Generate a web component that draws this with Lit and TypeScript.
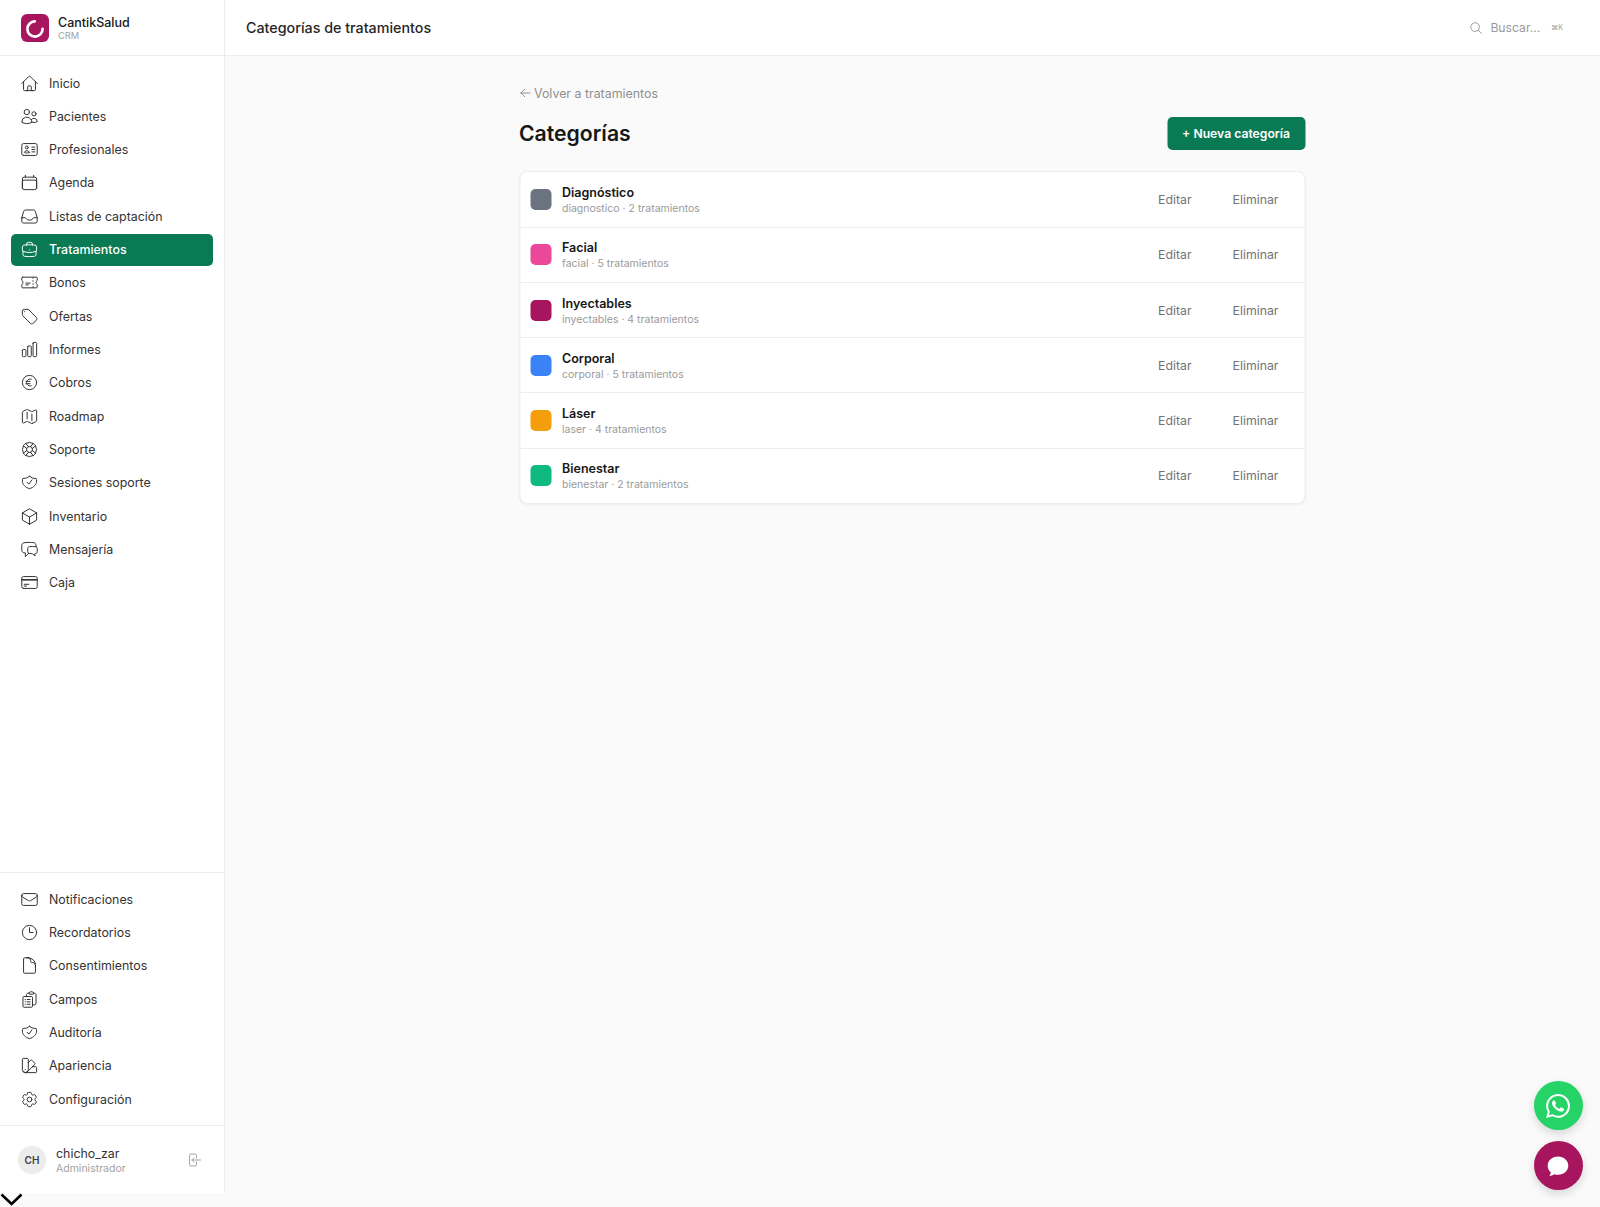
import { LitElement, html, css, svg } from "lit";
import { customElement } from "lit/decorators.js";

const SHIELD = "M9 11.75 11.25 14 15 8.75m-3-4.5A12 12 0 0 1 3.6 7c-.4 1-.6 2-.6 3.2 0 4.4 3.8 8 9 9.6 5.2-1.6 9-5.2 9-9.6 0-1.2-.2-2.2-.6-3.2A12 12 0 0 1 12 4.25Z";
const P: Record<string, string> = {
  home: "m2.25 12 8.954-8.955c.44-.439 1.152-.439 1.591 0L21.75 12M4.5 9.75v10.125c0 .621.504 1.125 1.125 1.125H9.75v-4.875c0-.621.504-1.125 1.125-1.125h2.25c.621 0 1.125.504 1.125 1.125V21h4.125c.621 0 1.125-.504 1.125-1.125V9.75M8.25 21h8.25",
  users: "M15 19.128a9.38 9.38 0 0 0 2.625.372 9.337 9.337 0 0 0 4.121-.952 4.125 4.125 0 0 0-7.533-2.493M15 19.128v-.003c0-1.113-.285-2.16-.786-3.07M15 19.128v.106A12.318 12.318 0 0 1 8.624 21c-2.331 0-4.512-.645-6.374-1.766l-.001-.109a6.375 6.375 0 0 1 11.964-3.07M12 6.375a3.375 3.375 0 1 1-6.75 0 3.375 3.375 0 0 1 6.75 0Zm8.25 2.25a2.625 2.625 0 1 1-5.25 0 2.625 2.625 0 0 1 5.25 0Z",
  id: "M15 9h3.75M15 12h3.75M15 15h3.75M4.5 19.5h15a2.25 2.25 0 0 0 2.25-2.25V6.75A2.25 2.25 0 0 0 19.5 4.5h-15a2.25 2.25 0 0 0-2.25 2.25v10.5A2.25 2.25 0 0 0 4.5 19.5Zm6-10.125a1.875 1.875 0 1 1-3.75 0 1.875 1.875 0 0 1 3.75 0Zm1.294 6.336a6.721 6.721 0 0 1-3.17.789 6.721 6.721 0 0 1-3.168-.789 3.376 3.376 0 0 1 6.338 0Z",
  cal: "M6.75 3v2.25M17.25 3v2.25M3 18.75V7.5a2.25 2.25 0 0 1 2.25-2.25h13.5A2.25 2.25 0 0 1 21 7.5v11.25m-18 0A2.25 2.25 0 0 0 5.25 21h13.5A2.25 2.25 0 0 0 21 18.75m-18 0v-7.5A2.25 2.25 0 0 1 5.25 9h13.5A2.25 2.25 0 0 1 21 11.25v7.5",
  inbox: "M2.25 13.5h3.86a2.25 2.25 0 0 1 2.012 1.244l.256.512a2.25 2.25 0 0 0 2.013 1.244h3.218a2.25 2.25 0 0 0 2.013-1.244l.256-.512a2.25 2.25 0 0 1 2.013-1.244h3.859m-19.5.338V18a2.25 2.25 0 0 0 2.25 2.25h15A2.25 2.25 0 0 0 21.75 18v-4.162c0-.224-.034-.447-.1-.661L19.24 5.338a2.25 2.25 0 0 0-2.15-1.588H6.911a2.25 2.25 0 0 0-2.15 1.588L2.35 13.177a2.25 2.25 0 0 0-.1.661Z",
  case: "M20.25 14.15v4.25c0 1.094-.787 2.036-1.872 2.18-2.087.277-4.216.42-6.378.42s-4.291-.143-6.378-.42c-1.085-.144-1.872-1.086-1.872-2.18v-4.25m16.5 0a2.18 2.18 0 0 0 .75-1.661V8.706c0-1.081-.768-2.015-1.837-2.175a48.114 48.114 0 0 0-3.413-.387m4.5 8.006c-.194.165-.42.295-.673.38A23.978 23.978 0 0 1 12 15.75c-2.648 0-5.195-.429-7.577-1.22a2.016 2.016 0 0 1-.673-.38m0 0A2.18 2.18 0 0 1 3 12.489V8.706c0-1.081.768-2.015 1.837-2.175a48.111 48.111 0 0 1 3.413-.387m7.5 0V5.25A2.25 2.25 0 0 0 13.5 3h-3a2.25 2.25 0 0 0-2.25 2.25v.894m7.5 0a48.667 48.667 0 0 0-7.5 0M12 12.75h.008v.008H12v-.008Z",
  ticket: "M16.5 6v.75m0 3v.75m0 3v.75m0 3V18m-9-5.25h5.25M7.5 15h3M3.375 5.25c-.621 0-1.125.504-1.125 1.125v3.026a2.999 2.999 0 0 1 0 5.198v3.026c0 .621.504 1.125 1.125 1.125h17.25c.621 0 1.125-.504 1.125-1.125v-3.026a2.999 2.999 0 0 1 0-5.198V6.375c0-.621-.504-1.125-1.125-1.125H3.375Z",
  tag: "M9.568 3H5.25A2.25 2.25 0 0 0 3 5.25v4.318c0 .597.237 1.17.659 1.591l9.581 9.581c.699.699 1.78.872 2.607.33a18.095 18.095 0 0 0 5.223-5.223c.542-.827.369-1.908-.33-2.607L11.16 3.66A2.25 2.25 0 0 0 9.568 3ZM6 6h.008v.008H6V6Z",
  bars: "M3 13.125C3 12.504 3.504 12 4.125 12h2.25c.621 0 1.125.504 1.125 1.125v6.75C7.5 20.496 6.996 21 6.375 21h-2.25A1.125 1.125 0 0 1 3 19.875v-6.75ZM9.75 8.625c0-.621.504-1.125 1.125-1.125h2.25c.621 0 1.125.504 1.125 1.125v11.25c0 .621-.504 1.125-1.125 1.125h-2.25a1.125 1.125 0 0 1-1.125-1.125V8.625ZM16.5 4.125c0-.621.504-1.125 1.125-1.125h2.25C20.496 3 21 3.504 21 4.125v15.75c0 .621-.504 1.125-1.125 1.125h-2.25a1.125 1.125 0 0 1-1.125-1.125V4.125Z",
  euro: "M14.25 7.756a4.5 4.5 0 1 0 0 8.488M7.5 10.5h5.25m-5.25 3h5.25M21 12a9 9 0 1 1-18 0 9 9 0 0 1 18 0Z",
  map: "M9 6.75V15m6-6v8.25m.503 3.498 4.875-2.437c.381-.19.622-.58.622-1.006V4.82c0-.836-.88-1.38-1.628-1.006l-3.869 1.934c-.317.159-.69.159-1.006 0L9.503 3.252a1.125 1.125 0 0 0-1.006 0L3.622 5.689C3.24 5.88 3 6.27 3 6.695V19.18c0 .836.88 1.38 1.628 1.006l3.869-1.934c.317-.159.69-.159 1.006 0l4.994 2.497c.317.158.69.158 1.006 0Z",
  buoy: "M16.712 4.33a9.027 9.027 0 0 1 1.652 1.306c.51.51.944 1.064 1.306 1.652M16.712 4.33l-3.448 4.138m3.448-4.138a9.014 9.014 0 0 0-9.424 0M19.67 7.288l-4.138 3.448m4.138-3.448a9.014 9.014 0 0 1 0 9.424m-4.138-5.976a3.736 3.736 0 0 0-.88-1.388 3.737 3.737 0 0 0-1.388-.88m2.268 2.268a3.765 3.765 0 0 1 0 2.528m-2.268-4.796a3.765 3.765 0 0 0-2.528 0m4.796 4.796c-.181.506-.475.982-.88 1.388a3.736 3.736 0 0 1-1.388.88m2.268-2.268 4.138 3.448m0 0a9.027 9.027 0 0 1-1.306 1.652c-.51.51-1.064.944-1.652 1.306m0 0-3.448-4.138m3.448 4.138a9.014 9.014 0 0 1-9.424 0m5.976-4.138a3.765 3.765 0 0 1-2.528 0m0 0a3.736 3.736 0 0 1-1.388-.88 3.737 3.737 0 0 1-.88-1.388m2.268 2.268L7.288 19.67m0 0a9.024 9.024 0 0 1-1.652-1.306 9.027 9.027 0 0 1-1.306-1.652m0 0 4.138-3.448M4.33 16.712a9.014 9.014 0 0 1 0-9.424m4.138 5.976a3.765 3.765 0 0 1 0-2.528m0 0c.181-.506.475-.982.88-1.388a3.736 3.736 0 0 1 1.388-.88m-2.268 2.268L4.33 7.288m6.406 1.18L7.288 4.33m0 0a9.024 9.024 0 0 0-1.652 1.306A9.025 9.025 0 0 0 4.33 7.288",
  shield: SHIELD,
  cube: "m21 7.5-9-5.25L3 7.5m18 0-9 5.25m9-5.25v9l-9 5.25M3 7.5l9 5.25M3 7.5v9l9 5.25m0-9v9",
  chat: "M20.25 8.511c.884.284 1.5 1.128 1.5 2.097v4.286c0 1.136-.847 2.1-1.98 2.193-.34.027-.68.052-1.02.072v3.091l-3-3c-1.354 0-2.694-.055-4.02-.163a2.115 2.115 0 0 1-.825-.242m9.345-8.334a2.126 2.126 0 0 0-.476-.095 48.64 48.64 0 0 0-8.048 0c-1.131.094-1.976 1.057-1.976 2.192v4.286c0 .837.46 1.58 1.155 1.951m9.345-8.334V6.637c0-1.621-1.152-3.026-2.76-3.235A48.455 48.455 0 0 0 11.25 3c-2.115 0-4.198.137-6.24.402-1.608.209-2.76 1.614-2.76 3.235v6.226c0 1.621 1.152 3.026 2.76 3.235.577.075 1.157.14 1.74.194V21l4.155-4.155",
  card: "M2.25 8.25h19.5M2.25 9h19.5m-16.5 5.25h6m-6 2.25h3m-3.75 3h15a2.25 2.25 0 0 0 2.25-2.25V6.75A2.25 2.25 0 0 0 19.5 4.5h-15a2.25 2.25 0 0 0-2.25 2.25v10.5A2.25 2.25 0 0 0 4.5 19.5Z",
  mail: "M21.75 6.75v10.5a2.25 2.25 0 0 1-2.25 2.25h-15a2.25 2.25 0 0 1-2.25-2.25V6.75m19.5 0A2.25 2.25 0 0 0 19.5 4.5h-15a2.25 2.25 0 0 0-2.25 2.25m19.5 0v.243a2.25 2.25 0 0 1-1.07 1.916l-7.5 4.615a2.25 2.25 0 0 1-2.36 0L3.32 8.91a2.25 2.25 0 0 1-1.07-1.916V6.75",
  clock: "M12 6v6h4.5m4.5 0a9 9 0 1 1-18 0 9 9 0 0 1 18 0Z",
  doc: "M19.5 14.25v-2.625a3.375 3.375 0 0 0-3.375-3.375h-1.5A1.125 1.125 0 0 1 13.5 7.125v-1.5a3.375 3.375 0 0 0-3.375-3.375H8.25m2.25 0H5.625c-.621 0-1.125.504-1.125 1.125v17.25c0 .621.504 1.125 1.125 1.125h12.75c.621 0 1.125-.504 1.125-1.125V11.25a9 9 0 0 0-9-9Z",
  clip: "M9 12h3.75M9 15h3.75M9 18h3.75m3 .75H18a2.25 2.25 0 0 0 2.25-2.25V6.108c0-1.135-.845-2.098-1.976-2.192a48.424 48.424 0 0 0-1.123-.08m-5.801 0c-.065.21-.1.433-.1.664 0 .414.336.75.75.75h4.5a.75.75 0 0 0 .75-.75 2.25 2.25 0 0 0-.1-.664m-5.8 0A2.251 2.251 0 0 1 13.5 2.25H15c1.012 0 1.867.668 2.15 1.586m-5.8 0c-.376.023-.75.05-1.124.08C9.095 4.01 8.25 4.973 8.25 6.108V8.25m0 0H4.875c-.621 0-1.125.504-1.125 1.125v11.25c0 .621.504 1.125 1.125 1.125h9.75c.621 0 1.125-.504 1.125-1.125V9.375c0-.621-.504-1.125-1.125-1.125H8.25ZM6.75 12h.008v.008H6.75V12Zm0 3h.008v.008H6.75V15Zm0 3h.008v.008H6.75V18Z",
  swatch: "M4.098 19.902a3.75 3.75 0 0 0 5.304 0l6.401-6.402M6.75 21A3.75 3.75 0 0 1 3 17.25V4.125C3 3.504 3.504 3 4.125 3h5.25c.621 0 1.125.504 1.125 1.125v4.072M6.75 21a3.75 3.75 0 0 0 3.75-3.75V8.197M6.75 21h13.125c.621 0 1.125-.504 1.125-1.125v-5.25c0-.621-.504-1.125-1.125-1.125h-4.072M10.5 8.197l2.88-2.88c.438-.439 1.15-.439 1.59 0l3.712 3.713c.44.44.44 1.152 0 1.59l-2.879 2.88M6.75 17.25h.008v.008H6.75v-.008Z",
  cog: "M9.594 3.94c.09-.542.56-.94 1.11-.94h2.593c.55 0 1.02.398 1.11.94l.213 1.281c.063.374.313.686.645.87.074.04.147.083.22.127.325.196.72.257 1.075.124l1.217-.456a1.125 1.125 0 0 1 1.37.49l1.296 2.247a1.125 1.125 0 0 1-.26 1.431l-1.003.827c-.293.241-.438.613-.43.992a7.723 7.723 0 0 1 0 .255c-.008.378.137.75.43.991l1.004.827c.424.35.534.955.26 1.43l-1.298 2.247a1.125 1.125 0 0 1-1.369.491l-1.217-.456c-.355-.133-.75-.072-1.076.124a6.47 6.47 0 0 1-.22.128c-.331.183-.581.495-.644.869l-.213 1.281c-.09.543-.56.94-1.11.94h-2.594c-.55 0-1.019-.398-1.11-.94l-.213-1.281c-.062-.374-.312-.686-.644-.87a6.52 6.52 0 0 1-.22-.127c-.325-.196-.72-.257-1.076-.124l-1.217.456a1.125 1.125 0 0 1-1.369-.49l-1.297-2.247a1.125 1.125 0 0 1 .26-1.431l1.004-.827c.292-.24.437-.613.43-.991a6.932 6.932 0 0 1 0-.255c.007-.38-.138-.751-.43-.992l-1.004-.827a1.125 1.125 0 0 1-.26-1.43l1.297-2.247a1.125 1.125 0 0 1 1.37-.491l1.216.456c.356.133.751.072 1.076-.124.072-.044.146-.086.22-.128.332-.183.582-.495.644-.869l.214-1.28ZM15 12a3 3 0 1 1-6 0 3 3 0 0 1 6 0Z",
  logout: "M15.75 9V5.25A2.25 2.25 0 0 0 13.5 3h-6a2.25 2.25 0 0 0-2.25 2.25v13.5A2.25 2.25 0 0 0 7.5 21h6a2.25 2.25 0 0 0 2.25-2.25V15M12 9l-3 3m0 0 3 3m-3-3h12.75",
  search: "m21 21-5.197-5.197m0 0A7.5 7.5 0 1 0 5.196 5.196a7.5 7.5 0 0 0 10.607 10.607Z",
  back: "M10.5 19.5 3 12m0 0 7.5-7.5M3 12h18",
};
const WA = "M17.472 14.382c-.297-.149-1.758-.867-2.03-.967-.273-.099-.471-.148-.67.15-.197.297-.767.966-.94 1.164-.173.199-.347.223-.644.075-.297-.15-1.255-.463-2.39-1.475-.883-.788-1.48-1.761-1.653-2.059-.173-.297-.018-.458.13-.606.134-.133.298-.347.446-.52.149-.174.198-.298.298-.497.099-.198.05-.371-.025-.52-.075-.149-.669-1.612-.916-2.207-.242-.579-.487-.5-.669-.51-.173-.008-.371-.01-.57-.01-.198 0-.52.074-.792.372-.272.297-1.04 1.016-1.04 2.479 0 1.462 1.065 2.875 1.213 3.074.149.198 2.096 3.2 5.077 4.487.709.306 1.262.489 1.694.625.712.227 1.36.195 1.871.118.571-.085 1.758-.719 2.006-1.413.248-.694.248-1.289.173-1.413-.074-.124-.272-.198-.57-.347m-5.421 7.403h-.004a9.87 9.87 0 01-5.031-1.378l-.361-.214-3.741.982.998-3.648-.235-.374a9.86 9.86 0 01-1.51-5.26c.001-5.45 4.436-9.884 9.888-9.884 2.64 0 5.122 1.03 6.988 2.898a9.825 9.825 0 012.893 6.994c-.003 5.45-4.437 9.884-9.885 9.884m8.413-18.297A11.815 11.815 0 0012.05 0C5.495 0 .16 5.335.157 11.892c0 2.096.547 4.142 1.588 5.945L.057 24l6.305-1.654a11.882 11.882 0 005.683 1.448h.005c6.554 0 11.89-5.335 11.893-11.893a11.821 11.821 0 00-3.48-8.413Z";

const icon = (k: string, cls = "ic") =>
  html`<svg class=${cls} viewBox="0 0 24 24" fill="none" stroke="currentColor" stroke-width="1.5" stroke-linecap="round" stroke-linejoin="round">${svg`<path d=${P[k]}></path>`}</svg>`;

const NAV: [string, string][] = [
  ["home", "Inicio"], ["users", "Pacientes"], ["id", "Profesionales"], ["cal", "Agenda"],
  ["inbox", "Listas de captación"], ["case", "Tratamientos"], ["ticket", "Bonos"], ["tag", "Ofertas"],
  ["bars", "Informes"], ["euro", "Cobros"], ["map", "Roadmap"], ["buoy", "Soporte"],
  ["shield", "Sesiones soporte"], ["cube", "Inventario"], ["chat", "Mensajería"], ["card", "Caja"],
];
const BOTTOM: [string, string][] = [
  ["mail", "Notificaciones"], ["clock", "Recordatorios"], ["doc", "Consentimientos"], ["clip", "Campos"],
  ["shield", "Auditoría"], ["swatch", "Apariencia"], ["cog", "Configuración"],
];
const CATS = [
  ["#6b7280", "Diagnóstico", "diagnostico · 2 tratamientos"],
  ["#ec4899", "Facial", "facial · 5 tratamientos"],
  ["#a8155f", "Inyectables", "inyectables · 4 tratamientos"],
  ["#3b82f6", "Corporal", "corporal · 5 tratamientos"],
  ["#f59e0b", "Láser", "laser · 4 tratamientos"],
  ["#10b981", "Bienestar", "bienestar · 2 tratamientos"],
];

@customElement("app-root")
export class AppRoot extends LitElement {
  static styles = css`
    :host { display: block; background: #fafafa; height: 1207px; overflow: hidden; font-family: Inter, "Liberation Sans", sans-serif; color: #171717; }
    * { box-sizing: border-box; }
    .shell { display: flex; height: 1193px; }
    .side { width: 225px; flex: none; background: #fff; border-right: 1px solid #ececec; display: flex; flex-direction: column; }
    .brand { height: 56px; flex: none; border-bottom: 1px solid #ededed; display: flex; align-items: center; gap: 9px; padding: 0 0 0 21px; }
    .logo { width: 28px; height: 28px; border-radius: 6px; background: #a8155f; flex: none; }
    .logo svg { display: block; width: 28px; height: 28px; }
    .btext { margin-top: 1.5px; }
    .bname { font-size: 12.5px; font-weight: 500; line-height: 15px; color: #171717; }
    .bsub { font-size: 9.3px; line-height: 11px; color: #a3a3a3; }
    .nav { flex: 1; padding: 11px 11px 0; display: flex; flex-direction: column; gap: 1.33px; }
    .nav.low { flex: none; border-top: 1px solid #ededed; padding: 10px 11px 10px; }
    .item { height: 32px; border-radius: 5px; display: flex; align-items: center; gap: 9.8px; padding: 0 0 0 9.2px; font-size: 12.4px; color: #333; }
    .item .ic { width: 19px; height: 19px; flex: none; stroke-width: 1.25; color: #333; }
    .item.on { background: #0a7a55; color: #fff; font-weight: 500; }
    .item.on .ic { color: #fff; }
    .user { flex: none; height: 68px; border-top: 1px solid #ededed; display: flex; align-items: center; padding: 0 18px; gap: 10px; }
    .ava { width: 28px; height: 28px; border-radius: 50%; background: #ececec; display: flex; align-items: center; justify-content: center; font-size: 10px; font-weight: 600; color: #404040; flex: none; }
    .uinfo { flex: 1; margin-top: 3px; }
    .uname { font-size: 12.4px; line-height: 16px; color: #333; }
    .urole { font-size: 10.5px; line-height: 14px; color: #a3a3a3; }
    .out { width: 16px; height: 16px; color: #a3a3a3; margin-right: 4px; }
    .main { flex: 1; display: flex; flex-direction: column; min-width: 0; }
    .top { height: 56px; flex: none; background: #fff; border-bottom: 1px solid #ededed; display: flex; align-items: center; padding: 0 37px 0 21px; }
    .title { flex: 1; font-size: 14.3px; font-weight: 500; color: #262626; }
    .sic { width: 14px; height: 14px; color: #8f8f8f; margin-right: 7px; }
    .sph { font-size: 12.2px; color: #9a9a9a; margin-right: 11px; }
    .kbd { font-size: 7px; color: #9a9a9a; }
    .content { width: 786px; margin: 0 auto; padding-top: 28px; transform: translateX(-.5px); }
    .backl { display: flex; align-items: center; gap: 3px; font-size: 12.4px; color: #8f8f8f; height: 18px; }
    .backl svg { width: 12px; height: 12px; color: #737373; }
    .head { display: flex; align-items: center; justify-content: space-between; margin-top: 14.5px; }
    h1 { margin: 0; font-size: 21.2px; font-weight: 600; color: #171717; }
    .btn { height: 33px; padding: 0 15px; border-radius: 5px; background: #0a7a55; color: #fff; font-size: 12.2px; font-weight: 600; display: flex; align-items: center; }
    .list { margin-top: 21.5px; background: #fff; border: 1px solid #ededed; border-radius: 8px; box-shadow: 0 1px 2px rgba(0,0,0,.05); overflow: hidden; }
    .row { height: 55.25px; display: flex; align-items: center; padding: 0 25.5px 0 10px; border-top: 1px solid #ededed; }
    .row:first-child { border-top: 0; height: 54.7px; }
    .dot { width: 21px; height: 21px; border-radius: 5px; flex: none; margin-right: 11px; }
    .rtext { flex: 1; margin-top: 2px; }
    .rname { font-size: 12.5px; font-weight: 600; line-height: 15px; color: #171717; }
    .rsub { font-size: 10.5px; line-height: 15px; color: #9a9a9a; margin-top: 1px; }
    .act { font-size: 12.3px; color: #737373; }
    .act + .act { margin-left: 41px; }
    .fab { position: fixed; left: 1533.5px; width: 49px; height: 49px; border-radius: 50%; display: flex; align-items: center; justify-content: center; box-shadow: 0 4px 10px rgba(0,0,0,.14); }
    .wa { top: 1081px; background: #25d366; }
    .wa svg { width: 24px; height: 24px; fill: #fff; }
    .msg { top: 1141px; background: #a8155f; }
    .msg svg { width: 24px; height: 24px; fill: #fff; }
    .chev { display: block; width: 24px; height: 14px; }
  `;

  render() {
    const row = ([k, t]: [string, string]) => html`<div class="item ${t === "Tratamientos" ? "on" : ""}">${icon(k)}<span>${t}</span></div>`;
    return html`
      <div class="shell">
        <aside class="side">
          <div class="brand">
            <div class="logo"><svg viewBox="0 0 28 28" fill="none" stroke="#fff" stroke-width="2.6" stroke-linecap="round"><path d="M13.8 7.4A7.6 7.6 0 1 0 21.6 14.8"></path></svg></div>
            <div class="btext"><div class="bname">CantikSalud</div><div class="bsub">CRM</div></div>
          </div>
          <nav class="nav">${NAV.map(row)}</nav>
          <nav class="nav low">${BOTTOM.map(row)}</nav>
          <div class="user">
            <div class="ava">CH</div>
            <div class="uinfo"><div class="uname">chicho_zar</div><div class="urole">Administrador</div></div>
            ${icon("logout", "out")}
          </div>
        </aside>
        <div class="main">
          <header class="top">
            <div class="title">Categorías de tratamientos</div>
            ${icon("search", "sic")}<span class="sph">Buscar...</span><span class="kbd">⌘K</span>
          </header>
          <section class="content">
            <div class="backl">${icon("back", "")}<span>Volver a tratamientos</span></div>
            <div class="head"><h1>Categorías</h1><div class="btn">+ Nueva categoría</div></div>
            <div class="list">
              ${CATS.map(([c, n, s]) => html`<div class="row">
                <div class="dot" style="background:${c}"></div>
                <div class="rtext"><div class="rname">${n}</div><div class="rsub">${s}</div></div>
                <span class="act">Editar</span><span class="act">Eliminar</span>
              </div>`)}
            </div>
          </section>
        </div>
      </div>
      <svg class="chev" viewBox="0 0 24 14" fill="none" stroke="#000" stroke-width="2.6"><path d="M1.5 1.5 11.6 11 21.5 1.5"></path></svg>
      <div class="fab wa"><svg viewBox="0 0 24 24"><path d=${WA}></path></svg></div>
      <div class="fab msg"><svg viewBox="0 0 24 24"><path d="M12 2.5C6.2 2.5 1.7 6.6 1.7 11.7c0 2.6 1.2 4.9 3.1 6.6-.1 1.3-.6 2.6-1.5 3.4 2 .1 4-.6 5.3-1.5 1.1.4 2.2.5 3.4.5 5.8 0 10.3-4 10.3-9 0-5.1-4.5-9.2-10.3-9.2Z"></path></svg></div>
    `;
  }
}
